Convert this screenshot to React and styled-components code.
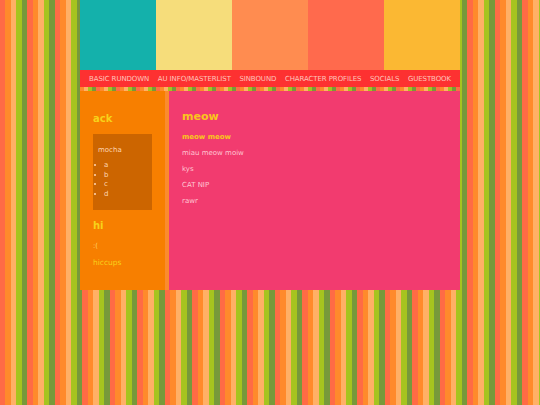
import React from "react";
import styled, { createGlobalStyle } from "styled-components";

// 55px tile = two 27.5px periods, split into whole-pixel stripes
const stripes = `linear-gradient(90deg,
  #ff6b45 0px, #ff6b45 5px,
  #ff8a2b 5px, #ff8a2b 11px,
  #ffb066 11px, #ffb066 16px,
  #a6c41f 16px, #a6c41f 22px,
  #77993b 22px, #77993b 27px,
  #ff6b45 27px, #ff6b45 33px,
  #ff8a2b 33px, #ff8a2b 38px,
  #ffb066 38px, #ffb066 44px,
  #a6c41f 44px, #a6c41f 49px,
  #77993b 49px, #77993b 55px)`;

const GlobalStyle = createGlobalStyle`
  html {
    min-height: 405px;
    background: ${stripes};
    background-size: 55px 100%;
  }
  body {
    margin: 0;
    padding: 0;
    font-family: "DejaVu Sans", "Noto Sans", sans-serif;
  }
`;

const navItems = [
  "BASIC RUNDOWN",
  "AU INFO/MASTERLIST",
  "SINBOUND",
  "CHARACTER PROFILES",
  "SOCIALS",
  "GUESTBOOK",
];

const headerColors = ["#14b1ab", "#f6dd7b", "#ff8c50", "#ff6a4d", "#fbb833"];

const App = () => {
  return (
    <>
      <GlobalStyle />
      <Wrapper>
        <Header>
          {headerColors.map((c) => (
            <ColorBlock key={c} color={c} />
          ))}
        </Header>
        <Nav>
          {navItems.map((item) => (
            <NavLink key={item}>{item}</NavLink>
          ))}
        </Nav>
        <Strip />
        <Content>
          <Sidebar>
            <SideTitle>ack</SideTitle>
            <Box>
              <BoxTitle>mocha</BoxTitle>
              <List>
                <li>a</li>
                <li>b</li>
                <li>c</li>
                <li>d</li>
              </List>
            </Box>
            <SideTitle spaced>hi</SideTitle>
            <SideText>:(</SideText>
            <SideLink>hiccups</SideLink>
          </Sidebar>
          <Main>
            <MainTitle>meow</MainTitle>
            <MainText highlight>meow meow</MainText>
            <MainText>miau meow moiw</MainText>
            <MainText>kys</MainText>
            <MainText>CAT NIP</MainText>
            <MainText>rawr</MainText>
          </Main>
        </Content>
      </Wrapper>
    </>
  );
};

const Wrapper = styled.div`
  width: 380px;
  margin: 0 auto;
`;

const Header = styled.div`
  display: flex;
  height: 70px;
`;

const ColorBlock = styled.div`
  flex: 1;
  background: ${(p) => p.color};
`;

const Nav = styled.div`
  display: flex;
  justify-content: space-between;
  align-items: center;
  height: 17px;
  padding: 0 9px;
  background: #fd3131;
`;

const NavLink = styled.span`
  font-size: 7px;
  color: #ffc4bb;
  white-space: nowrap;
  letter-spacing: -0.1px;
`;

const Strip = styled.div`
  height: 4px;
  background: linear-gradient(90deg,
    #ff8a2b 0px, #ff8a2b 4px,
    #ffb066 4px, #ffb066 8px,
    #a6c41f 8px, #a6c41f 12px,
    #77993b 12px, #77993b 16px,
    #ff6b45 16px, #ff6b45 20px);
  background-size: 20px 100%;
`;

const Content = styled.div`
  display: flex;
  height: 199px;
`;

const Sidebar = styled.div`
  width: 72px;
  padding: 22px 0 0 13px;
  background: #f77f00;
  border-right: 4px solid #fb8c2e;
`;

const SideTitle = styled.div`
  font-size: 10px;
  line-height: 12px;
  font-weight: bold;
  color: #f7d21a;
  margin-top: ${(p) => (p.spaced ? "10px" : "0")};
`;

const Box = styled.div`
  width: 59px;
  height: 66px;
  margin-top: 9px;
  padding-top: 10px;
  background: #cc6500;
`;

const BoxTitle = styled.div`
  padding-left: 5px;
  font-size: 7px;
  line-height: 12px;
  color: #ffd6b3;
`;

const List = styled.ul`
  margin: 5px 0 0;
  padding-left: 1px;
  list-style: disc inside;
  font-size: 7px;
  line-height: 9.5px;
  color: #ffd6b3;
`;

const SideText = styled.div`
  margin-top: 8px;
  font-size: 7px;
  line-height: 12px;
  color: #ffd36b;
`;

const SideLink = styled.div`
  margin-top: 5px;
  font-size: 7.5px;
  line-height: 12px;
  color: #f7d21a;
`;

const Main = styled.div`
  flex: 1;
  padding: 19px 0 0 13px;
  background: #f23b6f;
`;

const MainTitle = styled.div`
  font-size: 11px;
  line-height: 14px;
  font-weight: bold;
  color: #f9c51c;
  margin-bottom: 8px;
`;

const MainText = styled.div`
  font-size: 7px;
  line-height: 10px;
  margin-bottom: 6px;
  font-weight: ${(p) => (p.highlight ? "bold" : "normal")};
  color: ${(p) => (p.highlight ? "#f9c51c" : "#ffc6d2")};
`;

export default App;
